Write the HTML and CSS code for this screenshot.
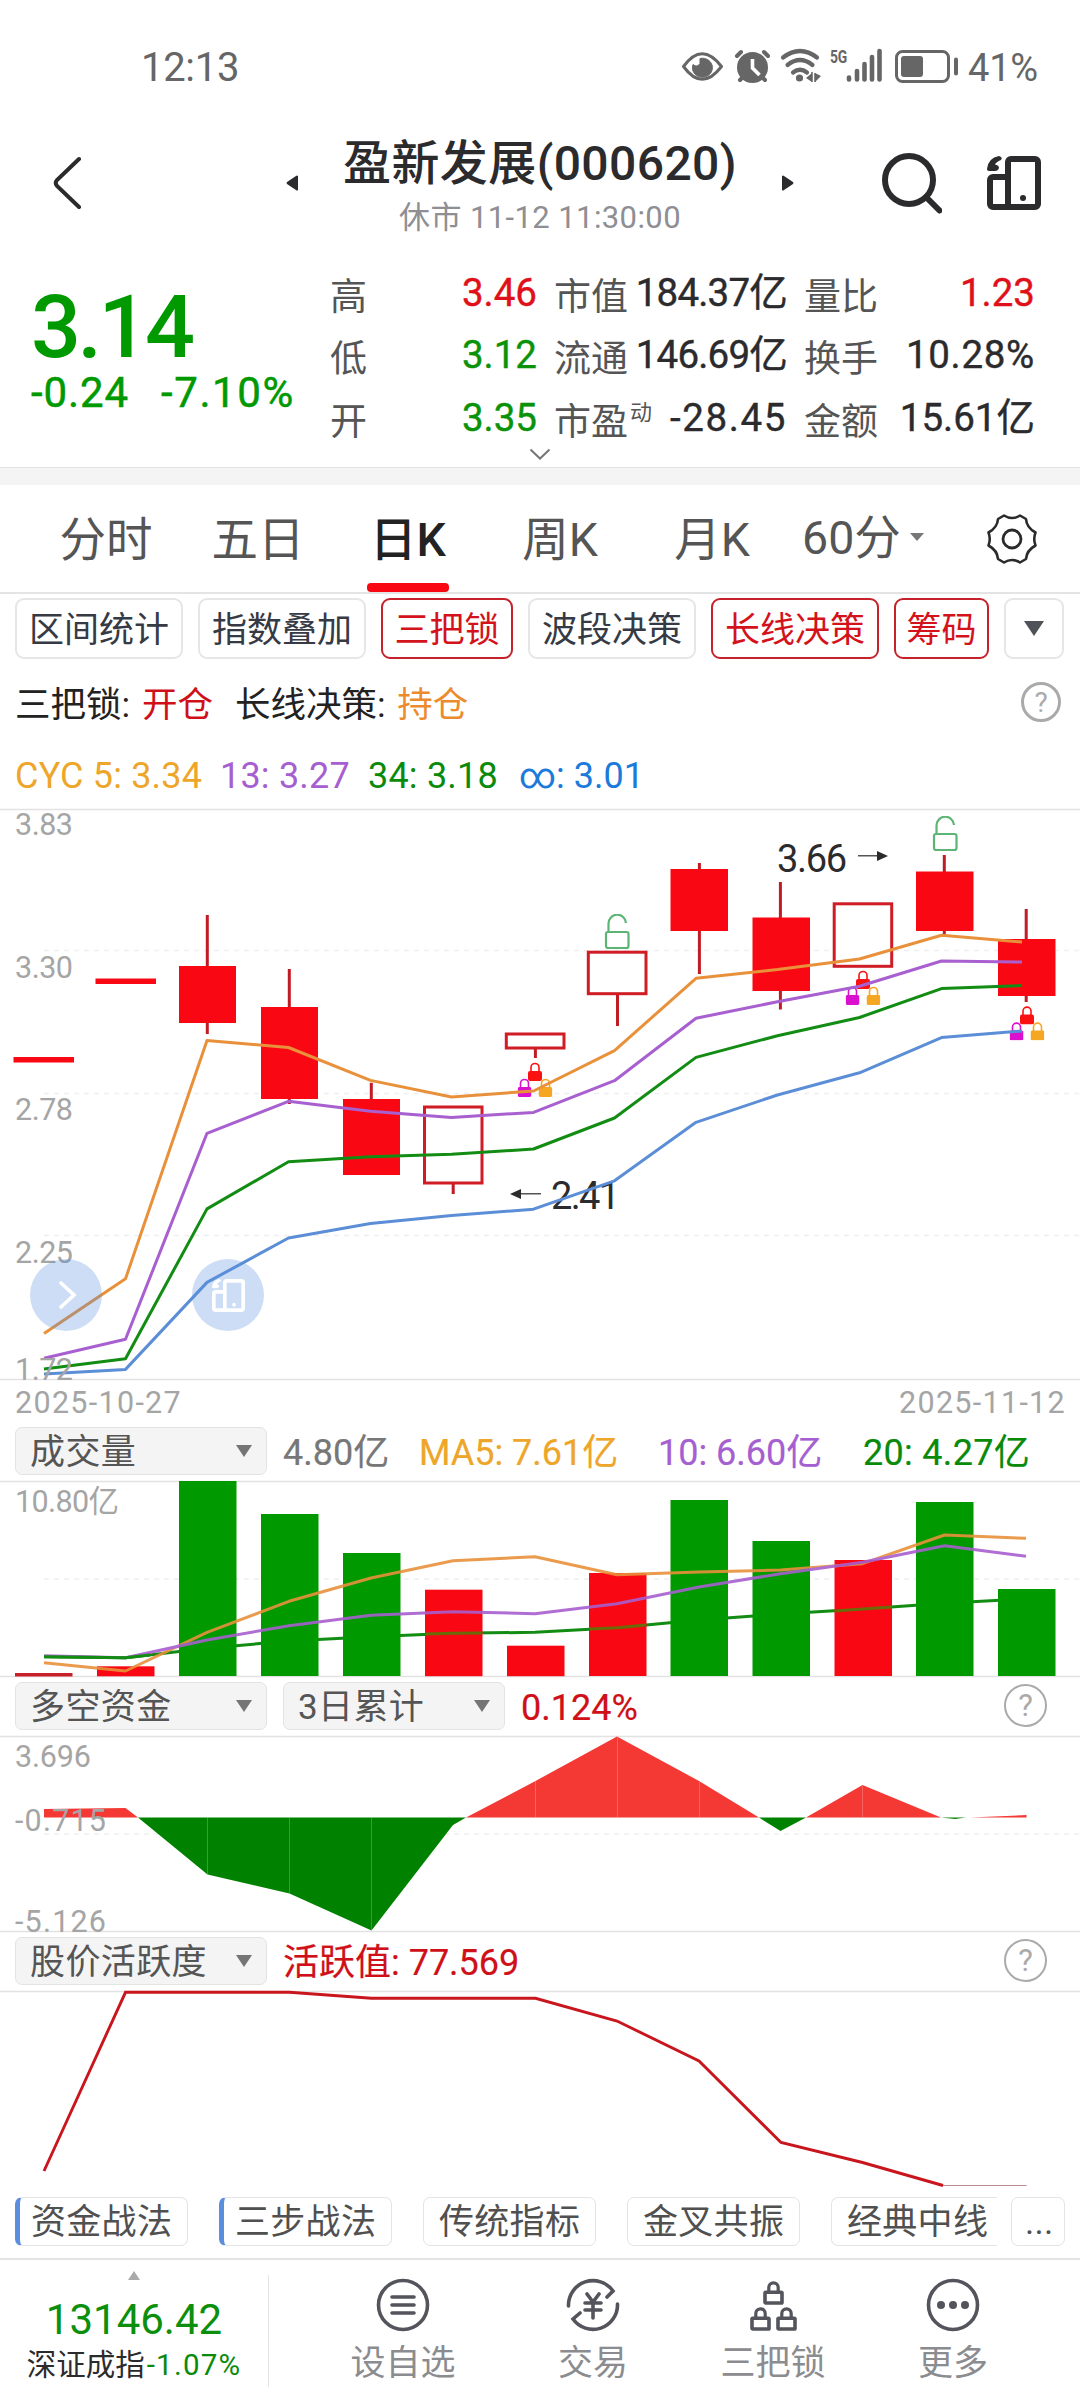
FILE: index.html
```html
<!DOCTYPE html>
<html lang="zh-CN">
<head>
<meta charset="utf-8">
<title>盈新发展(000620)</title>
<link rel="stylesheet" href="styles.css">
</head>
<body>
<svg class="defs" aria-hidden="true">
  <symbol id="rotate" viewBox="0 0 54 54">
    <path d="M21 51V6a3 3 0 0 1 3-3h24a3 3 0 0 1 3 3v42a3 3 0 0 1-3 3H6a3 3 0 0 1-3-3V24a3 3 0 0 1 3-3h15" fill="none" stroke="currentColor" stroke-width="6"/>
    <path d="M0 13Q1 2 12 0Q16 1 14 4Q9 6 8 8.500Q12 9 12 12Q11 15 8 15H3Q0 15 0 13Z" fill="currentColor"/>
    <circle cx="36" cy="42" r="3" fill="currentColor"/>
  </symbol>
  <symbol id="lock" viewBox="0 0 14 19"><path d="M3 10V5.500a4 4 0 0 1 8 0V10" fill="none" stroke="currentColor" stroke-width="1.600"/><rect y="9" width="14" height="10" rx="2" fill="currentColor"/></symbol>
  <symbol id="unlock" viewBox="0 0 26 36"><path d="M4.500 18V10a8.500 8.500 0 0 1 17.500-1" fill="none" stroke="#5cb574" stroke-width="2.200"/><rect x="2" y="18" width="22.500" height="16" rx="2" fill="none" stroke="#5cb574" stroke-width="2.200"/></symbol>
  <symbol id="trio" viewBox="0 0 35 35">
    <use href="#lock" x="10.500" y="0" width="14" height="19" color="#fa1111"/>
    <use href="#lock" x="0" y="16" width="14" height="19" color="#d911cf"/>
    <use href="#lock" x="21" y="16" width="14" height="19" color="#f5a623"/>
  </symbol>
  <symbol id="padlock" viewBox="0 0 21 25"><path d="M5.800 11V7.500a4.700 4.700 0 0 1 9.400 0V11" fill="none" stroke="currentColor" stroke-width="3.200"/><rect x="2" y="12.300" width="17" height="10.700" rx=".8" fill="none" stroke="currentColor" stroke-width="3.600"/></symbol>
</svg>

<div class="status">
  <span class="clock">12:13</span>
  <svg class="status-icons" viewBox="675 40 290 50" width="290" height="50">
    <g fill="none" stroke="#666" stroke-width="3">
      <path d="M683.500 65.500Q702 40 721.500 65.500Q702 91 683.500 65.500Z" stroke-linejoin="round"/>
      <path d="M700 57.500a10 9.500 0 1 1-7 6q4 3.500 7-1z" fill="#666" stroke-width="1"/>
      <path d="M737 55l4-4M768 55l-4-4M740 79l3-3M765 79l-3-3" stroke-width="4" stroke-linecap="round"/>
      <circle cx="752.500" cy="66.500" r="15.500" fill="#666" stroke="none"/>
      <path d="M752.500 58v9l7 7" stroke="#fff" stroke-width="3.600"/>
      <path d="M783 56.500q17-13 34 0M787.500 64q12.500-10 25 0M793 71.500q7-5.500 14 0" stroke-width="4.200" stroke-linecap="round"/>
      <circle cx="799.500" cy="77" r="3.600" fill="#666" stroke="none"/>
      <path d="M806 77l6-5v9M821 75l-6-3v9" fill="#666" stroke="none"/><path d="M812 71v10M815 72v9" stroke-width="1.500"/>
      <path d="M849 76.500v2M857 70v8.500M864.500 63v15.500M872 56v22.500M879.500 50v28.500" stroke-width="4.600" stroke-linecap="round"/>
      <rect x="896.500" y="50.500" width="52" height="30" rx="6"/>
      <rect x="901" y="55" width="22" height="21" rx="3" fill="#666" stroke="none"/>
      <path d="M956 58.500v14" stroke-width="4" stroke-linecap="round"/>
    </g>
    <text class="net" x="830" y="62" textLength="17" lengthAdjust="spacingAndGlyphs">5G</text>
  </svg>
  <span class="percent">41%</span>
</div>

<header class="header">
  <svg class="back" viewBox="0 0 30 54" width="30" height="54"><path d="M27 3L5 24q-2.500 3 0 6L27 51" fill="none" stroke="#2b2b2d" stroke-width="4" stroke-linecap="round"/></svg>
  <svg class="prev" viewBox="0 0 12 16" width="12" height="16"><path d="M12 1v14q-1 1-2 0L1 9q-1-1 0-2l9-6q1-1 2 0" fill="#2b2b2d"/></svg>
  <div class="title-box">
    <h1 class="title">盈新发展(000620)</h1>
    <p class="subtitle">休市 11-12 11:30:00</p>
  </div>
  <svg class="next" viewBox="0 0 12 16" width="12" height="16"><path d="M0 1v14q1 1 2 0l9-6q1-1 0-2L2 1q-1-1-2 0" fill="#2b2b2d"/></svg>
  <svg class="search" viewBox="0 0 60 62" width="60" height="62"><circle cx="27" cy="27" r="24" fill="none" stroke="#2b2b2d" stroke-width="6"/><path d="M46 46l11.500 11.500" stroke="#2b2b2d" stroke-width="6" stroke-linecap="round"/></svg>
  <svg class="split" width="54" height="54"><use href="#rotate"/></svg>
</header>

<section class="quote">
  <div class="price">
    <div class="last">3.14</div>
    <div class="change"><span class="diff">-0.24</span><span class="pct">-7.10%</span></div>
  </div>
  <dl class="facts">
    <dt>高</dt><dd class="up">3.46</dd><dt>市值</dt><dd class="tight">184.37亿</dd><dt>量比</dt><dd class="up">1.23</dd>
    <dt>低</dt><dd class="down">3.12</dd><dt>流通</dt><dd class="tight">146.69亿</dd><dt>换手</dt><dd class="loose">10.28%</dd>
    <dt>开</dt><dd class="down">3.35</dd><dt>市盈<sup>动</sup></dt><dd class="loose wide">-28.45</dd><dt>金额</dt><dd>15.61亿</dd>
  </dl>
  <svg class="expand" viewBox="0 0 22 12" width="22" height="12"><path d="M1.500 1.500l9.500 9 9.500-9" fill="none" stroke="#777" stroke-width="2"/></svg>
</section>

<nav class="tabs">
  <span class="tab">分时</span><span class="tab">五日</span><span class="tab active">日K</span><span class="tab">周K</span><span class="tab">月K</span>
  <span class="tab minutes">60分<i class="caret-sm"></i></span>
  <svg class="gear" viewBox="-26 -26 52 52" width="52" height="52"><path d="M-8-23.500Q0-18.500 8-23.500L14-20Q14.500-11.500 23.500-6.500Q21 0 23.500 6.500Q14.500 11.500 14 20L8 23.500Q0 18.500-8 23.500L-14 20Q-14.500 11.500-23.500 6.500Q-21 0-23.500-6.500Q-14.500-11.500-14-20Z" fill="none" stroke="#2b2b2d" stroke-width="2.600" stroke-linejoin="round"/><circle r="9" fill="none" stroke="#2b2b2d" stroke-width="2.800"/></svg>
</nav>

<div class="chips">
  <span class="chip">区间统计</span><span class="chip">指数叠加</span><span class="chip on w3">三把锁</span><span class="chip">波段决策</span><span class="chip on">长线决策</span><span class="chip on w2">筹码</span><span class="chip more"><i class="caret-lg"></i></span>
</div>

<div class="signals"><span>三把锁: <b class="red">开仓</b></span><span>长线决策: <b class="amber">持仓</b></span><i class="help">?</i></div>
<div class="cyc"><span class="c-gold">CYC 5: 3.34</span><span class="c-purple">13: 3.27</span><span class="c-green">34: 3.18</span><span class="c-blue">∞: 3.01</span></div>

<section class="kline">
  <svg class="plot" viewBox="0 809 1080 571" width="1080" height="571">
    <path class="grid" d="M44 950.500H1080M44 1093.500H1080M44 1235.500H1080"/>
    <path class="rule" d="M0 809.500H1080M0 1379.500H1080"/>
    <g class="note"><text x="777" y="872" textLength="70">3.66</text><text x="551" y="1209" textLength="69">2.41</text></g>
    <path d="M858 855.800H880M519 1193.800H541" stroke="#555" stroke-width="1.500"/><path d="M888 856l-11-5v10zM510 1194l11-5v10z" fill="#2b2b2d"/>
    <g class="wick"><path d="M207.300 915V1034M289.300 969V1104M371.300 1082.700V1100M453.200 1184V1194M535.400 1049V1058M617.500 995V1026M699.400 863V974M780.400 882V1009.500M944.300 855V934.500M1026.200 909V1002"/></g>
    <g class="solid">
      <rect x="13.500" y="1057" width="60.500" height="5.500"/><rect x="95.500" y="978.500" width="60.500" height="5.500"/>
      <rect x="179" y="966" width="57" height="57"/><rect x="261" y="1007" width="57" height="92"/><rect x="343" y="1099" width="57" height="76"/>
      <rect x="670.500" y="869" width="57.500" height="62"/><rect x="752.500" y="917.500" width="57.500" height="73.500"/><rect x="916" y="871.500" width="57.500" height="59.500"/><rect x="998" y="939" width="57.500" height="57"/>
    </g>
    <g class="hollow"><rect x="424.500" y="1107" width="57.500" height="76"/><rect x="506.300" y="1034" width="57.700" height="14"/><rect x="588.300" y="952.200" width="57.700" height="41.500"/><rect x="834.200" y="903.800" width="57.500" height="62.500"/></g>
    <use href="#unlock" x="604" y="914" width="26" height="36"/><use href="#unlock" x="932" y="816" width="26" height="36"/>
    <use href="#trio" x="517.500" y="1062" width="35" height="35"/><use href="#trio" x="845.500" y="970" width="35" height="35"/><use href="#trio" x="1009.500" y="1005.600" width="35" height="35"/>
    <g class="line">
      <polyline class="l-orange" points="44,1333.400 125.500,1278.800 207,1040.400 288.500,1047.500 370.500,1080.400 451.500,1097 533.500,1091 614.500,1050.700 696,978.300 777.500,969.600 859.500,959 941.500,935.200 1022,942"/>
      <polyline class="l-purple" points="44,1358.300 125.500,1339.300 207,1133.300 288.500,1101.300 370.500,1111.200 451.500,1117.500 533.500,1112.400 614.500,1080.700 696,1018.300 777.500,1001.700 859.500,986.200 941.500,961 1022,962"/>
      <polyline class="l-green" points="44,1369 125.500,1358.700 207,1208.900 288.500,1161.800 370.500,1156.700 451.500,1154.300 533.500,1149 614.500,1118 696,1057.400 777.500,1035.700 859.500,1017.500 941.500,988.600 1022,985.500"/>
      <polyline class="l-blue" points="44,1374 125.500,1369.400 207,1282.400 288.500,1238 370.500,1223.500 451.500,1215.600 533.500,1209.200 614.500,1180.800 696,1122.300 777.500,1095 859.500,1072.800 941.500,1037.600 1022,1031"/>
    </g>
    <g class="axis"><text x="15" y="835" textLength="58">3.83</text><text x="15" y="978" textLength="58">3.30</text><text x="15" y="1120" textLength="58">2.78</text><text x="15" y="1262.500" textLength="58">2.25</text><text x="15" y="1379.500" textLength="58">1.72</text></g>
  </svg>
  <span class="float float-go"><svg viewBox="0 0 18 28" width="18" height="28"><path d="M2 2l13 12L2 26" fill="none" stroke="#fff" stroke-width="3.600" stroke-linecap="round"/></svg></span>
  <span class="float float-split"><svg width="33" height="33"><use href="#rotate"/></svg></span>
</section>
<div class="dates"><span>2025-10-27</span><span>2025-11-12</span></div>

<div class="bar"><span class="select">成交量<i class="caret"></i></span><span class="v v1">4.80亿</span><span class="v v2">MA5: 7.61亿</span><span class="v v3">10: 6.60亿</span><span class="v v4">20: 4.27亿</span></div>
<section>
  <svg class="plot" viewBox="0 1481 1080 196" width="1080" height="196">
    <path class="grid" d="M44 1579H1080"/><path class="rule" d="M0 1481.500H1080M0 1676.500H1080"/>
    <text class="axis" x="15" y="1512" textLength="104">10.80亿</text>
    <g class="line"><polyline class="l-green" points="44,1656.700 125.500,1657.700 207,1648.300 289,1641 371,1636.700 453,1633.300 535,1632.300 617,1627.700 699,1620 780.500,1614 862.500,1609 944.500,1603.300 1026,1598.700"/></g>
    <g fill="#f90813"><rect x="15" y="1673" width="57.500" height="3.500" fill="#c8202a"/><rect x="97" y="1666.300" width="57.500" height="10"/><rect x="425" y="1589.700" width="57.500" height="86.500"/><rect x="507" y="1645.700" width="57.500" height="30.500"/><rect x="589" y="1573" width="57.500" height="103"/><rect x="834.500" y="1560" width="57.500" height="116"/></g>
    <g class="line over-red"><polyline points="425,1634 453,1633.300 482,1633"/><polyline points="589,1629 617,1627.700 646,1625"/><polyline points="834.500,1611 862.500,1609 892,1607"/></g>
    <g fill="#090"><rect x="179" y="1481" width="57.500" height="195"/><rect x="261" y="1514" width="57.500" height="162"/><rect x="343" y="1553" width="57.500" height="123"/><rect x="670.500" y="1500" width="57.500" height="176"/><rect x="752.500" y="1541" width="57.500" height="135"/><rect x="916" y="1502" width="57.500" height="174"/><rect x="998" y="1589" width="57.500" height="87"/></g>
    <g class="line" opacity=".9">
      <polyline class="l-orange" points="44,1662.700 125.500,1671 207,1632.300 289,1601.300 371,1578 453,1560.700 535,1556.700 617,1574.700 699,1572 780.500,1570 862.500,1563.700 944.500,1535 1026,1538.300"/>
      <polyline class="l-purple" points="44,1655.700 125.500,1657.700 207,1640 289,1625.700 371,1615.300 453,1611.700 535,1613.700 617,1603.700 699,1587 780.500,1573.700 862.500,1562.300 944.500,1545.700 1026,1556.300"/>
    </g>
    <g class="line"><polyline class="l-green" points="44,1656.700 125.500,1657.700 150,1655"/></g>
  </svg>
</section>

<div class="bar funds"><span class="select">多空资金<i class="caret"></i></span><span class="select period">3日累计<i class="caret"></i></span><span class="v red">0.124%</span><i class="help big">?</i></div>
<section>
  <svg class="plot" viewBox="0 1736 1080 196" width="1080" height="196">
    <path class="grid" d="M44 1834H1080"/><path class="rule" d="M0 1736.500H1080M0 1931.500H1080"/>
    <path fill="#f43834" d="M44 1817.500V1809L125.500 1808 138 1817.500ZM466 1817.500L535.500 1781 617 1736.500 699 1781 759 1817.500ZM806 1817.500L862.500 1785 941 1817.500ZM970 1817.500L1026.500 1815V1817.500Z"/>
    <path fill="#008200" d="M138 1817.500L207.500 1874.500 289.500 1893.500 371.500 1930.500 453 1825 466 1817.500ZM759 1817.500L780.500 1831 806 1817.500ZM941 1817.500L955 1819 966 1817.500Z"/>
    <path stroke="#fff" stroke-opacity=".22" d="M207.500 1818v56M289.500 1818v75M371.500 1818v112M535.500 1781v36M617.500 1737v80M699.500 1782v35M862.500 1786v31"/>
    <g class="axis"><text x="15" y="1767" textLength="76">3.696</text><text x="15" y="1831" textLength="91">-0.715</text><text x="15" y="1931.500" textLength="91">-5.126</text></g>
  </svg>
</section>

<div class="bar activity"><span class="select">股价活跃度<i class="caret"></i></span><span class="v red">活跃值: 77.569</span><i class="help big">?</i></div>
<section>
  <svg class="plot" viewBox="0 1991 1080 196" width="1080" height="196">
    <path class="rule" d="M0 1991.500H1080"/>
    <polyline fill="none" stroke="#c9161e" stroke-width="2.900" points="44,2171 125.500,1992.300 207,1992.300 289.500,1992.300 371.500,1998.300 535.500,1998.300 617,2021 699,2061 781,2142.500 862.500,2162.500 943,2185.500"/>
    <path d="M943 2185.500H1026.500" stroke="#b98c8e"/>
  </svg>
</section>

<div class="methods"><span class="method marked">资金战法</span><span class="method marked">三步战法</span><span class="method">传统指标</span><span class="method">金叉共振</span><span class="method cut">经典中线</span><span class="method dots">...</span></div>

<footer class="footer">
  <div class="index"><i class="caret-up"></i><div class="index-value">13146.42</div><div class="index-name">深证成指<span>-1.07%</span></div></div>
  <div class="action a1"><svg viewBox="-27 -27 54 54" width="54" height="54"><circle r="24.500"/><path d="M-11-8H11M-11 0H11M-11 8H11"/></svg><span>设自选</span></div>
  <div class="action a2"><svg viewBox="-27 -27 54 54" width="54" height="54"><path d="M-24.500 1A24.500 24.500 0 0 1 20-14L14-8M24.500-1A24.500 24.500 0 0 1-20 14L-13 8M-6-11L0-3 6-11M-8-2H8M-8 5H8M0-3V13"/></svg><span>交易</span></div>
  <div class="action a3"><svg viewBox="0 0 54 54" width="54" height="54"><use href="#padlock" x="17" y="2" width="21" height="25"/><use href="#padlock" x="4" y="28" width="21" height="25"/><use href="#padlock" x="30" y="28" width="21" height="25"/></svg><span>三把锁</span></div>
  <div class="action a4"><svg viewBox="-27 -27 54 54" width="54" height="54"><circle r="24.500"/><g class="fill"><circle cx="-12" r="4"/><circle r="4"/><circle cx="12" r="4"/></g></svg><span>更多</span></div>
</footer>
</body>
</html>
```
FILE: styles.css
```css
* { box-sizing: border-box; }
body {
  margin: 0;
  width: 1080px;
  height: 2400px;
  overflow: hidden;
  display: flex;
  flex-direction: column;
  background: #fff;
  color: #2b2b2d;
  font-family: Roboto, "Noto Sans CJK SC", sans-serif;
}
body > * { flex: none; }
.defs { position: absolute; width: 0; height: 0; }
i, b { font-style: normal; font-weight: 400; }
svg { display: block; }
.red { color: #cf1018; }
.amber { color: #ec8b2d; }

.status { height: 130px; padding: 41px 0 0 141px; display: flex; color: #666; font-size: 40px; line-height: 54px; letter-spacing: -0.3px; }
.clock { width: 534px; }
.percent { margin-left: 3px; font-size: 38px; line-height: 54px; letter-spacing: -0.2px; }
.net { font: 700 19px Roboto, sans-serif; fill: #666; }

.header { height: 130px; display: flex; align-items: flex-start; padding-left: 52px; }
.back { margin-top: 26px; }
.prev { margin: 45px 0 0 204px; }
.title-box { width: 484px; text-align: center; white-space: nowrap; }
.title { margin: 4px 0 0; font-size: 48px; line-height: 60px; font-weight: 500; letter-spacing: 0.4px; }
.subtitle { margin: 4px 0 0; font-size: 31px; line-height: 40px; color: #8e8e93; letter-spacing: 0.4px; }
.next { margin-top: 45px; }
.search { margin: 23px 0 0 88px; }
.split { margin: 26px 0 0 45px; }

.quote { height: 225px; position: relative; display: flex; border-bottom: 17px solid #f4f4f4; box-shadow: inset 0 -1px #e3e3e3; }
.price { width: 300px; padding: 17px 0 0 31px; color: #090; white-space: nowrap; }
.last { font-size: 88px; line-height: 100px; font-weight: 500; letter-spacing: -3.500px; }
.change { display: flex; font-size: 42px; line-height: 50px; margin-top: -9px; letter-spacing: 0.9px; -webkit-text-stroke: 0.5px; }
.diff { width: 130px; }
.pct { letter-spacing: 1.600px; }
.facts { margin: 2px 0 0 30px; width: 705px; height: 187px; display: grid; grid-template-columns: 60px 147px 93px 157px 93px 155px; grid-template-rows: repeat(3, 62.300px); align-items: center; white-space: nowrap; }
.facts dt { font-size: 37px; line-height: 62px; padding-top: 5px; height: 62px; color: #555; }
.facts dt:nth-of-type(3n+2), .facts dt:nth-of-type(3n) { padding-left: 17px; }
.facts dd { margin: 0; text-align: right; font-size: 38.500px; line-height: 62px; letter-spacing: 0; -webkit-text-stroke: 0.4px; }
.facts .tight { letter-spacing: -0.8px; }
.facts .loose { letter-spacing: 0.7px; }
.facts .wide { letter-spacing: 1.600px; }
.facts sup { font-size: 22px; vertical-align: 15px; line-height: 0; margin-left: 2px; }
.facts .up { color: #e0101a; }
.facts .down { color: #0a930a; }
.expand { position: absolute; left: 529px; top: 188px; }

.tabs { height: 109px; display: flex; border-bottom: 2px solid #e4e4e4; font-size: 46.500px; line-height: 111px; color: #555; white-space: nowrap; }
.tab { width: 152px; text-align: center; }
.tab:first-child { margin-left: 30px; }
.tab.active { color: #222; font-weight: 500; position: relative; }
.tab.active::after { content: ""; position: absolute; left: 33px; bottom: 0; width: 82px; height: 9px; border-radius: 4px; background: #f90813; }
.tab.active, .tab.active ~ .tab:not(.minutes) { padding-right: 4px; }
.minutes { display: flex; align-items: center; width: 196px; padding-left: 12px; }
.caret-sm { margin: -4px 0 0 9px; border: 7px solid transparent; border-top: 8px solid #777; border-bottom: 0; }
.gear { margin-top: 28px; }

.chips { height: 69px; padding: 4px 15px 0; display: flex; gap: 15px; }
.chip { width: 168px; height: 61px; border: 2px solid #e5e6e8; border-radius: 9px; font-size: 35px; line-height: 62px; text-align: center; color: #363a44; white-space: nowrap; }
.chip.on { color: #d3121b; border-color: #c5222b; }
.chip.w3 { width: 132px; }
.chip.w2 { width: 95px; }
.chip.more { width: 60px; padding: 21px 0 0 18px; }
.caret-lg { display: block; width: 0; border: 10px solid transparent; border-top: 15px solid #505259; border-bottom: 0; }

.signals { height: 77px; padding-left: 15px; display: flex; align-items: center; gap: 22px; font-size: 35.500px; color: #222; white-space: nowrap; }
.signals b { margin-left: 3px; }
.help { margin-left: auto; margin-right: 19px; width: 40px; height: 40px; border: 3px solid #aaa; border-radius: 50%; text-align: center; font-size: 28px; line-height: 35px; color: #aaa; }
.help.big { width: 43px; height: 43px; margin-right: 33px; border-width: 2.500px; line-height: 39px; font-size: 31px; }
.cyc { height: 69px; padding: 2px 0 0 15px; display: flex; align-items: center; font-size: 36px; letter-spacing: 0.2px; white-space: nowrap; }
.c-gold { width: 205px; color: #eda62a; }
.c-purple { width: 148px; color: #a65fd0; }
.c-green { width: 151px; color: #0a8a0a; }
.c-blue { color: #1c7adb; letter-spacing: 0; }

.plot { overflow: visible; }
.kline { position: relative; height: 571px; }
.grid { stroke: #efefef; stroke-width: 1.600; stroke-dasharray: 5 5; fill: none; }
.rule { stroke: #e2e2e2; stroke-width: 1.500; fill: none; }
.note { font-size: 38px; fill: #2b2b2d; }
.wick { stroke: #c11b25; stroke-width: 3; fill: none; }
.solid { fill: #f90813; }
.hollow { fill: #fff; stroke: #d01c25; stroke-width: 3; }
.axis { font-size: 30.500px; fill: #a5a5a5; }
.line polyline { fill: none; stroke-width: 3; stroke-linejoin: round; }
.line .l-orange { stroke: #e8913a; }
.line .l-purple { stroke: #a85fd0; }
.line .l-green { stroke: #128c12; }
.line .l-blue { stroke: #5b8ed6; }
.over-red polyline { stroke: #6b6a08; }
.float { position: absolute; top: 450px; width: 72px; height: 72px; border-radius: 50%; background: rgba(85, 143, 223, 0.3); display: grid; place-items: center; color: #fff; }
.float-go { left: 30px; padding-left: 3px; }
.float-split { left: 192px; }

.dates { height: 47px; padding: 0 14px 0 15px; display: flex; justify-content: space-between; font-size: 30.500px; line-height: 45px; color: #a5a5a5; letter-spacing: 1.300px; }

.bar { height: 54px; padding-left: 15px; display: flex; align-items: flex-start; font-size: 36px; line-height: 52px; white-space: nowrap; }
.funds, .activity { height: 59px; padding-top: 5px; }
.select { width: 252px; height: 48px; margin-right: 16px; padding: 4px 14px 0; display: flex; justify-content: space-between; align-items: center; background: #f4f4f4; border: 1px solid #e3e3e3; border-radius: 7px; font-size: 35px; letter-spacing: 0.4px; color: #555; }
.period { width: 222px; }
.caret { margin-top: -5px; border: 8.500px solid transparent; border-top: 12px solid #757575; border-bottom: 0; }
.v { -webkit-text-stroke: 0.2px; }
.v1 { width: 136px; color: #777; }
.v2 { width: 239px; color: #eda62a; }
.v3 { width: 205px; color: #a65fd0; }
.v4 { color: #0a8a0a; letter-spacing: 0.3px; }
.funds .help, .activity .help { margin-top: 2px; }

.methods { height: 71px; padding: 10px 0 0 15px; display: flex; gap: 31px; }
.method { flex: none; width: 173px; height: 49px; padding-left: 15px; border: 1.500px solid #e4e4e6; border-radius: 7px; font-size: 35px; line-height: 50px; letter-spacing: 0.3px; color: #505050; white-space: nowrap; }
.marked { border-left: 5px solid #5b8edc; padding-left: 11px; }
.cut { width: 166px; border-right: 0; border-radius: 7px 0 0 7px; }
.dots { width: 54px; margin-left: -17px; padding-left: 13px; }

.footer { height: 142px; display: flex; border-top: 2px solid #e4e4e4; }
.index { width: 269px; height: 112px; margin-top: 15px; border-right: 1.500px solid #e4e4e4; text-align: center; white-space: nowrap; }
.caret-up { display: block; width: 0; margin: -4px auto 0; border: 6px solid transparent; border-bottom: 9px solid #aaa; border-top: 0; }
.index-value { margin-top: 15px; color: #0c8f0c; font-size: 42px; line-height: 50px; }
.index-name { font-size: 29.500px; line-height: 40px; }
.index-name span { color: #0a8a0a; margin-left: 2px; letter-spacing: 1.200px; }
.action { width: 180px; padding-top: 18px; display: flex; flex-direction: column; align-items: center; font-size: 35px; line-height: 44px; color: #8b8c90; }
.action svg { color: #53545c; stroke: currentColor; fill: none; stroke-width: 3.600; stroke-linecap: round; }
.action span { margin-top: 10px; }
.action .fill { fill: currentColor; stroke: none; }
.a1 { margin-left: 44px; }
.a2 { margin-left: 10px; }
```
